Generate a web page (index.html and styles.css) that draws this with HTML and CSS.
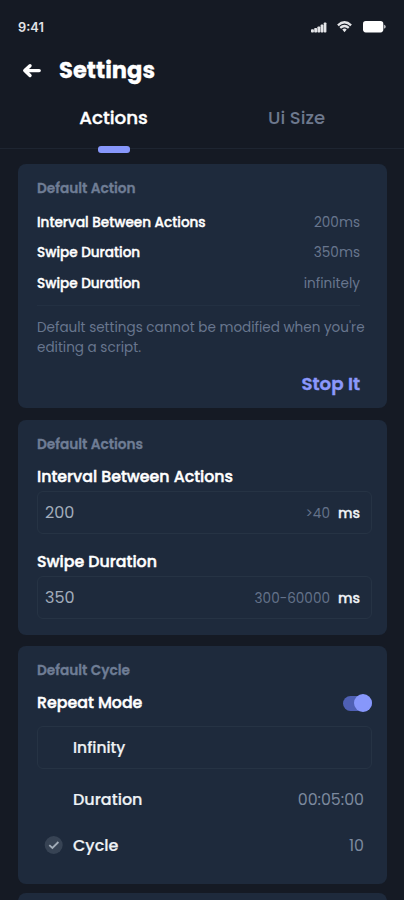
FILE: index.html
```html
<!DOCTYPE html>
<html lang="en">
<head>
<meta charset="utf-8">
<title>Settings</title>
<link rel="stylesheet" href="styles.css">
</head>
<body>
<div class="screen">
  <div class="status">
    <span class="time">9:41</span>
    <div class="indicators">
      <svg class="signal" width="16" height="11" viewBox="0 0 16 11" fill="#e4e5e8"><rect x="0" y="7.2" width="2.9" height="3.3" rx=".8"/><rect x="3.2" y="6" width="2.9" height="4.5" rx=".8"/><rect x="6.4" y="4.4" width="2.9" height="6.1" rx=".8"/><rect x="9.6" y="2.6" width="2.9" height="7.9" rx=".8"/><rect x="12.8" y=".4" width="2.6" height="10.1" rx=".8"/></svg>
      <svg class="wifi" width="15" height="12" viewBox="0 0 15 12" fill="none" stroke="#e4e5e8" stroke-width="2.3"><path d="M.9 4.3Q7.5-1.7 14.1 4.3"/><path d="M3.2 6.9Q7.5 3 11.8 6.9"/><path d="M5.3 8.5Q7.5 6.7 9.7 8.5L7.5 11.2Z" fill="#e4e5e8" stroke="none"/></svg>
      <svg class="battery" width="23" height="12" viewBox="0 0 23 12" fill="#fff"><rect x="0" y="0" width="20.3" height="11.4" rx="2.8"/><path d="M20.8 3.6Q22.8 4.3 22.8 5.7T20.8 7.8Z" fill="#b8babf"/></svg>
    </div>
  </div>
  <header class="title-bar">
    <svg class="back" width="20" height="16" viewBox="0 0 20 16" fill="none" stroke="#fff" stroke-width="3.4" stroke-linecap="round" stroke-linejoin="round"><path d="M17.2 7.6H3.4M8 2.7L2.8 7.6L8 12.5"/></svg>
    <h1>Settings</h1>
  </header>
  <nav class="tabs">
    <div class="tab active"><span>Actions</span></div>
    <div class="tab"><span>Ui Size</span></div>
  </nav>
  <main class="cards">
    <section class="card summary">
      <h2>Default Action</h2>
      <dl>
        <div class="pair"><dt>Interval Between Actions</dt><dd>200ms</dd></div>
        <div class="pair"><dt>Swipe Duration</dt><dd>350ms</dd></div>
        <div class="pair"><dt>Swipe Duration</dt><dd>infinitely</dd></div>
      </dl>
      <p class="note">Default settings cannot be modified when you're<br>editing a script.</p>
      <div class="stop">Stop It</div>
    </section>
    <section class="card fields">
      <h2>Default Actions</h2>
      <h3>Interval Between Actions</h3>
      <div class="field"><span class="value">200</span><span class="hint">&gt;40</span><span class="unit">ms</span></div>
      <h3 class="second">Swipe Duration</h3>
      <div class="field"><span class="value">350</span><span class="hint">300-60000</span><span class="unit">ms</span></div>
    </section>
    <section class="card cycle">
      <h2>Default Cycle</h2>
      <div class="mode"><h3>Repeat Mode</h3><span class="toggle"></span></div>
      <div class="option boxed"><span class="mark"></span><span class="name infinity">Infinity</span></div>
      <div class="option"><span class="mark"></span><span class="name">Duration</span><span class="amount">00:05:00</span></div>
      <div class="option"><span class="mark"><svg width="18" height="18" viewBox="0 0 18 18" fill="none"><circle cx="8.7" cy="9" r="9" fill="#374354"/><path d="M4.3 9.1L7.4 12L13.4 6" stroke="#a3adb9" stroke-width="1.8"/></svg></span><span class="name">Cycle</span><span class="amount">10</span></div>
    </section>
    <section class="card next"></section>
  </main>
</div>
</body>
</html>
```
FILE: styles.css
```css
* { box-sizing: border-box; margin: 0; padding: 0; }
body { background: #151a24; color: #fff; font-family: Poppins, Inter, sans-serif; }
.screen { width: 404px; height: 900px; overflow: hidden; display: flex; flex-direction: column; }
.status { flex: none; height: 54px; padding: 0 18px; display: flex; align-items: center; justify-content: space-between; }
.time { font-family: Inter, sans-serif; font-size: 12.8px; font-weight: 600; color: #e2e3e6; }
.indicators { display: flex; align-items: center; }
.signal, .wifi, .battery { overflow: visible; }
.wifi { margin: 0 11px 0 10px; }
.title-bar { flex: none; height: 33px; display: flex; align-items: center; padding-left: 22px; gap: 17px; }
h1 { font-size: 22.6px; line-height: 33px; font-weight: 700; white-space: nowrap; -webkit-text-stroke: .3px #fff; }
.tabs { flex: none; height: 62px; border-bottom: 1px solid #1e2531; display: grid; grid-template-columns: 183px 183px; padding-left: 22px; }
.tab { position: relative; text-align: center; font-size: 18px; line-height: 62px; font-weight: 500; color: #6d788d; }
.tab.active { font-size: 18.3px; color: #fff; -webkit-text-stroke: .4px #fff; }
.tab.active::after { content: ""; position: absolute; left: 76px; bottom: -4px; width: 32px; height: 7px; border-radius: 3px; background: #8797fb; }
.cards { flex: none; padding: 15px 17px 0 18px; display: flex; flex-direction: column; }
.card { background: #1e2a3c; border-radius: 8px; padding: 0 15px 0 19px; flex: none; margin-bottom: 12px; }
h2 { font-size: 13.7px; line-height: 20px; font-weight: 600; color: #6f7d95; padding-top: 15px; white-space: nowrap; -webkit-text-stroke: .3px #6f7d95; }
h3 { font-size: 15.8px; line-height: 24px; font-weight: 500; white-space: nowrap; -webkit-text-stroke: .45px #fff; }
.summary { height: 244px; }
dl { margin-top: 9px; padding-bottom: 6px; margin-right: 12px; border-bottom: 1px solid #233042; }
.pair { display: flex; justify-content: space-between; font-size: 13.6px; line-height: 30.3px; }
dt { font-weight: 500; -webkit-text-stroke: .4px #fff; }
dd { color: #68768e; }
.note { margin-top: 12px; font-size: 13.55px; line-height: 20.5px; color: #68768e; white-space: nowrap; }
.stop { margin: 11px 12px 0 0; text-align: right; font-size: 18.2px; line-height: 27px; font-weight: 600; color: #8b98fb; -webkit-text-stroke: .4px #8b98fb; }
.fields { height: 215px; margin-bottom: 11px; }
.fields h3 { margin-top: 10px; }
.field { margin-top: 2px; height: 43px; border: 1px solid #263344; border-radius: 6px; padding: 0 11px 0 7px; display: flex; align-items: center; }
.fields h3.second { margin-top: 16px; }
.value { font-size: 16px; color: #a2adbb; margin-right: auto; }
.hint { font-size: 13.6px; color: #64728a; margin-right: 8px; padding-top: 2px; }
.unit { font-size: 14px; font-weight: 500; color: #f0f3f6; padding-top: 1px; -webkit-text-stroke: .3px #f0f3f6; }
.cycle { height: 238px; margin-bottom: 9px; }
.mode { margin-top: 10px; display: flex; justify-content: space-between; align-items: center; }
.toggle { position: relative; width: 29px; height: 15px; border-radius: 8px; background: #4f60b4; }
.toggle::after { content: ""; position: absolute; right: 0; top: -1.5px; width: 18px; height: 18px; border-radius: 50%; background: #8797fb; }
.option { height: 46px; display: flex; align-items: center; padding: 0 8px; font-size: 16px; border: 0 solid #263344; }
.option.boxed { height: 43px; margin-top: 11px; margin-bottom: 7px; border-width: 1px; border-radius: 6px; padding: 0 7px; }
.mark { width: 18px; height: 18px; margin-right: 10px; }
.mark svg { display: block; overflow: visible; }
.name { font-weight: 500; color: #eef2f5; -webkit-text-stroke: .2px #eef2f5; }
.name.infinity { font-size: 15.5px; }
.amount { margin-left: auto; font-size: 15.8px; color: #7c899e; }
.next { height: 60px; margin: 0; }
```
